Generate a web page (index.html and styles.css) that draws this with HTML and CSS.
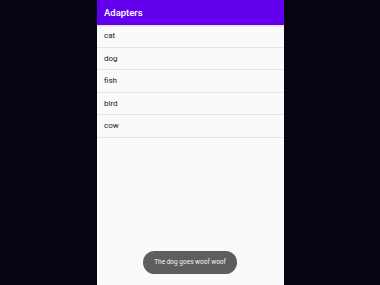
FILE: index.html
```html
<!DOCTYPE html>
<html>
<head>
<meta charset="utf-8">
<link rel="stylesheet" href="styles.css">
</head>
<body>
<div class="stage">
  <div class="phone">
    <div class="appbar">Adapters</div>
    <ul class="list">
      <li class="row">cat</li>
      <li class="row">dog</li>
      <li class="row">fish</li>
      <li class="row">bird</li>
      <li class="row">cow</li>
    </ul>
    <div class="toast">The dog goes woof woof</div>
  </div>
</div>
</body>
</html>
```
FILE: styles.css
```css
html, body {
  margin: 0;
  padding: 0;
  background: #050611;
  height: 285px;
  overflow: hidden;
}
.stage {
  display: flex;
  padding-left: 97px;
  height: 285px;
}
.phone {
  position: relative;
  width: 187px;
  height: 285px;
  background: #fafafa;
  font-family: Roboto, "Liberation Sans", sans-serif;
  display: flex;
  flex-direction: column;
}
.appbar {
  height: 25px;
  background: #6200ee;
  color: #ffffff;
  font-weight: 500;
  font-size: 9.5px;
  line-height: 25px;
  padding-left: 7px;
  box-shadow: 0 1px 2px rgba(0,0,0,0.15);
}
.list {
  list-style: none;
  margin: 0;
  padding: 0;
}
.row {
  height: 21.5px;
  line-height: 22px;
  padding-left: 7px;
  font-size: 8px;
  color: #222222;
  border-bottom: 1px solid #e6e6e6;
}
.toast {
  position: absolute;
  left: 46px;
  top: 251px;
  width: 94px;
  height: 23px;
  border-radius: 12px;
  background: #5e5e5e;
  color: #f4f4f4;
  font-size: 6.5px;
  line-height: 23px;
  text-align: center;
}
```
